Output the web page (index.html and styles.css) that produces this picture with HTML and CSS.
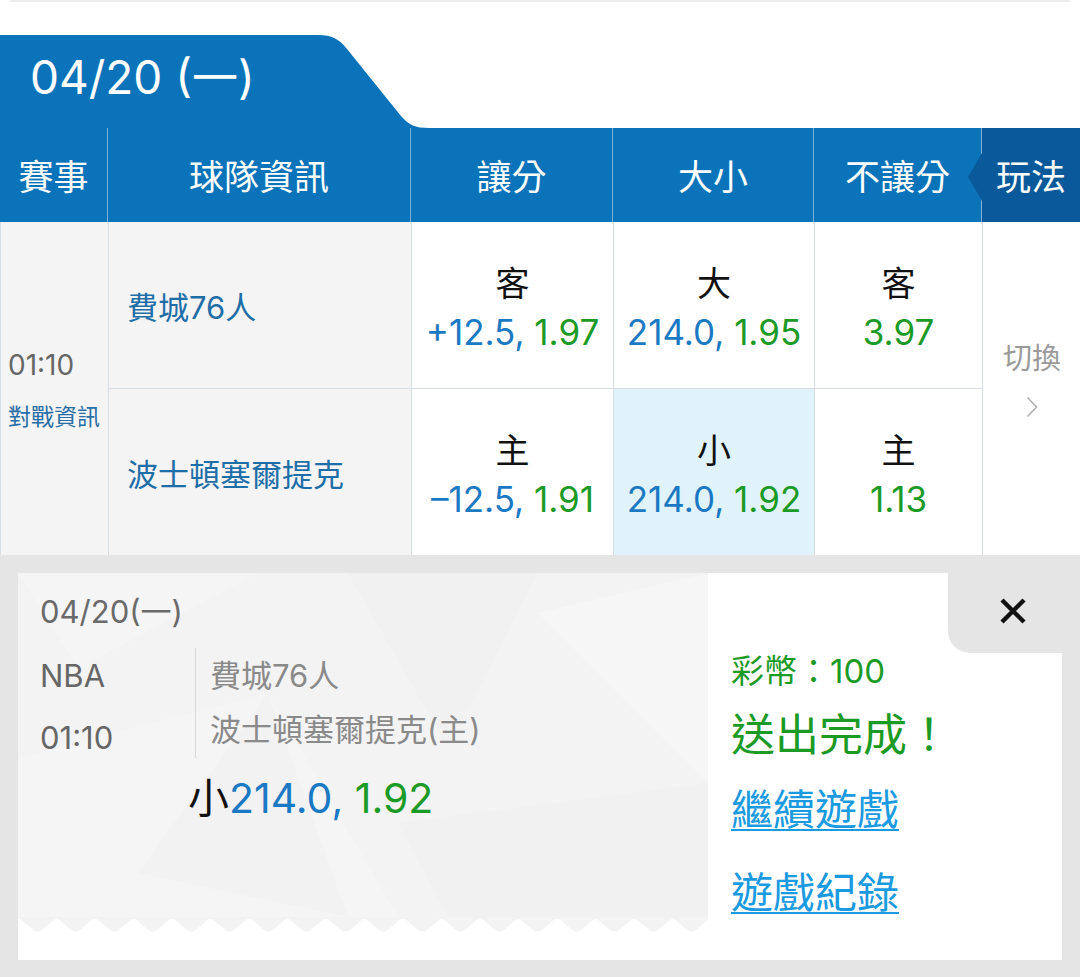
FILE: index.html
```html
<!DOCTYPE html>
<html lang="zh-Hant">
<head>
<meta charset="utf-8">
<title>NBA</title>
<link rel="stylesheet" href="styles.css">
</head>
<body>
<div class="topline"></div>
<div class="tabbar">
  <div class="date-tab"><span>04/20 (一)</span></div>
</div>
<div class="thead">
  <div class="th">賽事</div>
  <div class="th">球隊資訊</div>
  <div class="th">讓分</div>
  <div class="th">大小</div>
  <div class="th">不讓分</div>
  <div class="th th-play">玩法</div>
</div>
<div class="tbody">
  <div class="c-event"><span class="time">01:10</span><span class="vs">對戰資訊</span></div>
  <div class="c-team r1">費城76人</div>
  <div class="c-odd r1"><span class="side">客</span><span class="val"><span class="b">+12.5,</span> <span class="g">1.97</span></span></div>
  <div class="c-odd r1"><span class="side">大</span><span class="val"><span class="b">214.0,</span> <span class="g">1.95</span></span></div>
  <div class="c-odd r1"><span class="side">客</span><span class="val"><span class="g">3.97</span></span></div>
  <div class="c-switch"><span>切換</span>
    <svg class="chev" width="12" height="22" viewBox="0 0 12 22"><polyline points="1.5,1.5 10.5,11 1.5,20.5" fill="none" stroke="#b0b0b0" stroke-width="1.6"/></svg>
  </div>
  <div class="c-team">波士頓塞爾提克</div>
  <div class="c-odd"><span class="side">主</span><span class="val"><span class="b">–12.5,</span> <span class="g">1.91</span></span></div>
  <div class="c-odd hl"><span class="side">小</span><span class="val"><span class="b">214.0,</span> <span class="g">1.92</span></span></div>
  <div class="c-odd"><span class="side">主</span><span class="val"><span class="g">1.13</span></span></div>
</div>
<div class="panel">
  <div class="card">
    <div class="card-left">
      <div class="card-body">
        <div class="c-date">04/20(一)</div>
        <div class="match">
          <div class="meta"><div>NBA</div><div class="meta-time">01:10</div></div>
          <div class="teams"><div>費城76人</div><div>波士頓塞爾提克(主)</div></div>
        </div>
        <div class="bet"><span class="side">小</span><span class="b">214.0,</span> <span class="g">1.92</span></div>
      </div>
      <div class="wave"></div>
    </div>
    <div class="card-right">
      <div class="close-row">
        <div class="close">
          <svg width="28" height="28" viewBox="0 0 28 28"><path d="M3 3L25 25M25 3L3 25" stroke="#111" stroke-width="4.4" fill="none"/></svg>
        </div>
      </div>
      <div class="info">
        <div class="coins">彩幣：100</div>
        <div class="done">送出完成！</div>
        <a class="link l1" href="#">繼續遊戲</a>
        <a class="link l2" href="#">遊戲紀錄</a>
      </div>
    </div>
  </div>
</div>
</body>
</html>
```
FILE: styles.css
```css
* { box-sizing: border-box; margin: 0; padding: 0; }
html, body { width: 1080px; height: 977px; overflow: hidden; background: #fff; }
body { font-family: Inter, "Noto Sans CJK TC", sans-serif; }

.topline { height: 2px; margin: 0 10px; background: #ececec; }

.tabbar { height: 126px; display: flex; align-items: flex-end; }
.date-tab {
  width: 440px; height: 93px;
  background: url("data:image/svg+xml;utf8,<svg xmlns='http://www.w3.org/2000/svg' width='440' height='93'><path d='M0 0H318C332 0 339 4 347 14L401 81C409 90 415 93 429 93H0Z' fill='%230b73ba'/></svg>") no-repeat;
  padding: 0 0 16px 30px;
  display: flex; align-items: center;
  color: #fff; font-size: 46px;
}

.thead {
  display: grid;
  grid-template-columns: 108px 303px 202px 201px 168px 98px;
  height: 94px;
  background: #0b73ba;
  color: #fff; font-size: 35px;
}
.th {
  display: flex; align-items: center; justify-content: center;
  border-right: 1px solid rgba(255,255,255,0.45);
  padding-bottom: 2px;
}
.th-play { background: #0a5a9b; position: relative; border-right: none; }
.th-play::before {
  content: ""; position: absolute; left: -14px; top: 25px;
  width: 14px; height: 48px; background: #0a5a9b;
  clip-path: polygon(100% 0, 0 50%, 100% 100%);
}

.tbody {
  display: grid;
  grid-template-columns: 108px 303px 202px 201px 168px 98px;
  grid-template-rows: 167px 166px;
  border-left: 1px solid #d6dde4;
}
.tbody > div { border-right: 1px solid #d6dde4; }
.tbody > .r1 { border-bottom: 1px solid #d6dde4; }
.c-event {
  grid-row: span 2; background: #f4f4f4;
  display: flex; flex-direction: column; justify-content: center; align-items: flex-start;
  padding-left: 7px;
}
.time { font-size: 28px; line-height: 34px; color: #666; }
.vs { font-size: 23px; line-height: 26px; color: #2a6ea6; margin-top: 22px; }
.c-team {
  background: #f4f4f4; display: flex; align-items: center;
  padding-left: 18px; font-size: 31px; color: #1e6ea8;
}
.c-odd {
  display: flex; flex-direction: column; align-items: center; justify-content: center;
  font-size: 34px; line-height: 49px; padding-top: 5px;
}
.c-odd .val { font-size: 35px; }
.c-odd.hl { background: #e0f3fb; }
.side { color: #111; }
.b { color: #1a79c2; }
.g { color: #1c9a26; }
.tbody > .c-switch {
  grid-row: span 2; border-right: none;
  display: flex; flex-direction: column; align-items: center; justify-content: center;
  color: #9a9a9a; font-size: 29px; padding-bottom: 25px;
}
.chev { margin-top: 19px; }

.panel { background: #e5e5e5; padding: 18px 18px 17px; height: 422px; }
.card { display: flex; height: 387px; background: #fff; }
.card-left { width: 690px; display: flex; flex-direction: column; }
.card-body {
  flex: 1;
  background: #f3f3f3 url("data:image/svg+xml;utf8,<svg xmlns='http://www.w3.org/2000/svg' width='690' height='344'><polygon points='0,0 240,0 60,95' fill='%23f5f5f5'/><polygon points='330,0 520,0 430,175' fill='%23f1f1f1'/><polygon points='0,185 250,120 380,344 0,344' fill='%23f5f5f5'/><polygon points='520,40 690,0 690,210' fill='%23f6f6f6'/><polygon points='380,250 690,210 690,344 430,344' fill='%23f1f1f1'/><polygon points='120,300 250,120 330,344' fill='%23f2f2f2'/></svg>") no-repeat;
  padding: 22px 0 0 22px;
  color: #777;
}
.c-date { font-size: 31px; line-height: 34px; color: #6a6a6a; }
.match { display: flex; align-items: flex-start; margin-top: 19px; }
.meta { width: 155px; font-size: 31px; line-height: 56px; color: #666; }
.meta-time { margin-top: 6px; }
.teams {
  border-left: 1px solid #d8d8d8; padding-left: 14px;
  font-size: 31px; line-height: 56px; color: #8a8a8a;
}
.teams div + div { margin-top: -2px; }
.bet { margin: 9px 0 0 148px; font-size: 41px; line-height: 46px; }
.wave {
  height: 43px;
  background: #fff url("data:image/svg+xml;utf8,<svg xmlns='http://www.w3.org/2000/svg' width='38.5' height='43' viewBox='0 0 38.5 43'><path d='M0 0H38.5V2C36 2 35 3 33 5L23.5 13C21 15 17.5 15 15 13L5.5 5C3.5 3 2.5 2 0 2Z' fill='%23f3f3f3'/></svg>") repeat-x;
  background-size: 38.5px 43px;
}

.card-right { flex: 1; display: flex; flex-direction: column; }
.close-row { display: flex; justify-content: flex-end; }
.close {
  width: 114px; height: 80px; background: #e5e5e5;
  border-bottom-left-radius: 22px;
  display: flex; align-items: center; justify-content: center;
  padding: 0 0 4px 16px;
}
.info { padding-left: 23px; display: flex; flex-direction: column; align-items: flex-start; }
.coins { font-size: 33px; line-height: 36px; color: #1c9a26; }
.done { font-size: 44px; line-height: 52px; color: #1c9a26; margin-top: 20px; }
.link {
  font-size: 42px; line-height: 50px; color: #1a9ae0;
  text-decoration: underline; text-decoration-thickness: 2px; text-underline-offset: 4px;
}
.l1 { margin-top: 24px; }
.l2 { margin-top: 33px; }
```
